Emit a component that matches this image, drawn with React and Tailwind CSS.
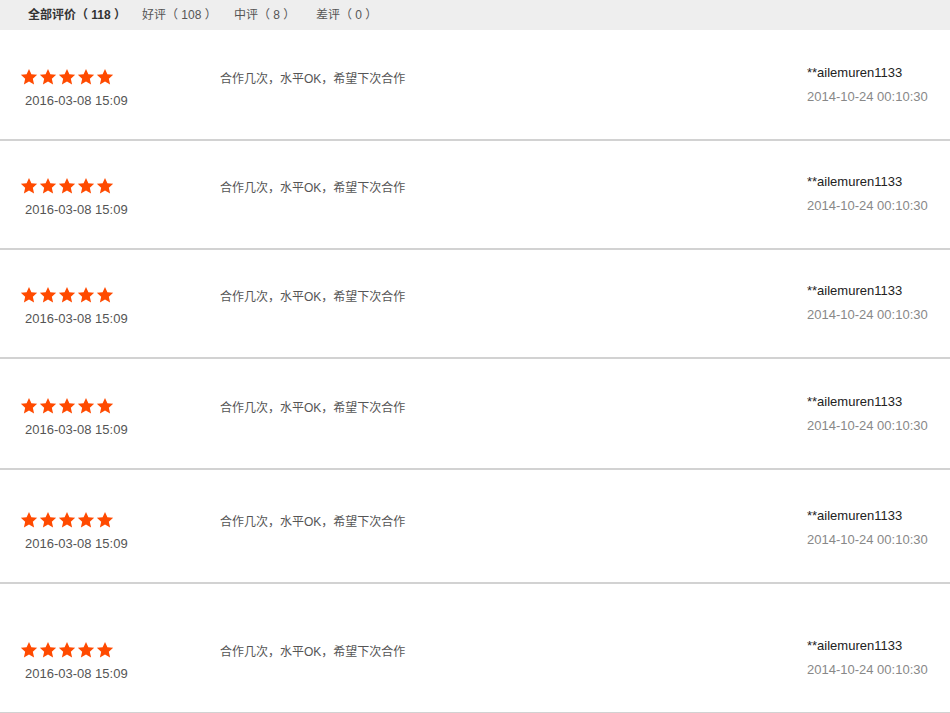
import React from "react";

const tabs = [
  { label: "全部评价（ 118 ）", active: true, w: "w-[114px]" },
  { label: "好评（ 108 ）", w: "w-[92px]" },
  { label: "中评（ 8 ）", w: "w-[82px]" },
  { label: "差评（ 0 ）", w: "" },
];

// top padding of each review row, taken from the picture
const rows = ["pt-[38px]", "pt-[36px]", "pt-[36px]", "pt-[38px]", "pt-[41px]", "pt-[57px]"];

const Star = () => (
  <svg viewBox="0 0 24 24" className="h-[18px] w-[18px]">
    <path
      d="M12 1.2l3.2 7.1 7.7.8-5.8 5.2 1.7 7.6L12 18l-6.8 3.9 1.7-7.6-5.8-5.2 7.7-.8z"
      fill="#ff4a00"
    />
  </svg>
);

const Stars = () => (
  <div className="flex gap-[1px] pl-[20px]">
    {[0, 1, 2, 3, 4].map((i) => (
      <Star key={i} />
    ))}
  </div>
);

const ReviewRow = ({ pad }) => {
  return (
    <div className={`flex items-start border-b-2 border-[#d2d2d2] pb-[30px] ${pad}`}>
      <div className="w-[220px] shrink-0">
        <Stars />
        <div className="mt-[7px] pl-[25px] text-[13px] leading-[16px] text-[#555]">2016-03-08 15:09</div>
      </div>
      <div className="mt-[3px] flex-1 text-[12px] leading-[16px] text-[#555]">合作几次，水平OK，希望下次合作</div>
      <div className="-mt-[3px] w-[143px] shrink-0 text-[13px] leading-[16px]">
        <div className="text-[#222]">**ailemuren1133</div>
        <div className="mt-[8px] text-[#888]">2014-10-24 00:10:30</div>
      </div>
    </div>
  );
};

export default function App() {
  return (
    <div
      className="w-[950px] bg-white"
      style={{ fontFamily: '"Liberation Sans", "Noto Sans CJK SC", sans-serif' }}
    >
      <div className="flex h-[30px] items-center bg-[#eeeeee] pl-[28px] text-[12px]">
        {tabs.map((t, i) => (
          <span
            key={i}
            className={`${t.w} ${t.active ? "font-bold text-[#333]" : "text-[#555]"}`}
          >
            {t.label}
          </span>
        ))}
      </div>
      {rows.map((p, i) => (
        <ReviewRow key={i} pad={p} />
      ))}
    </div>
  );
}
